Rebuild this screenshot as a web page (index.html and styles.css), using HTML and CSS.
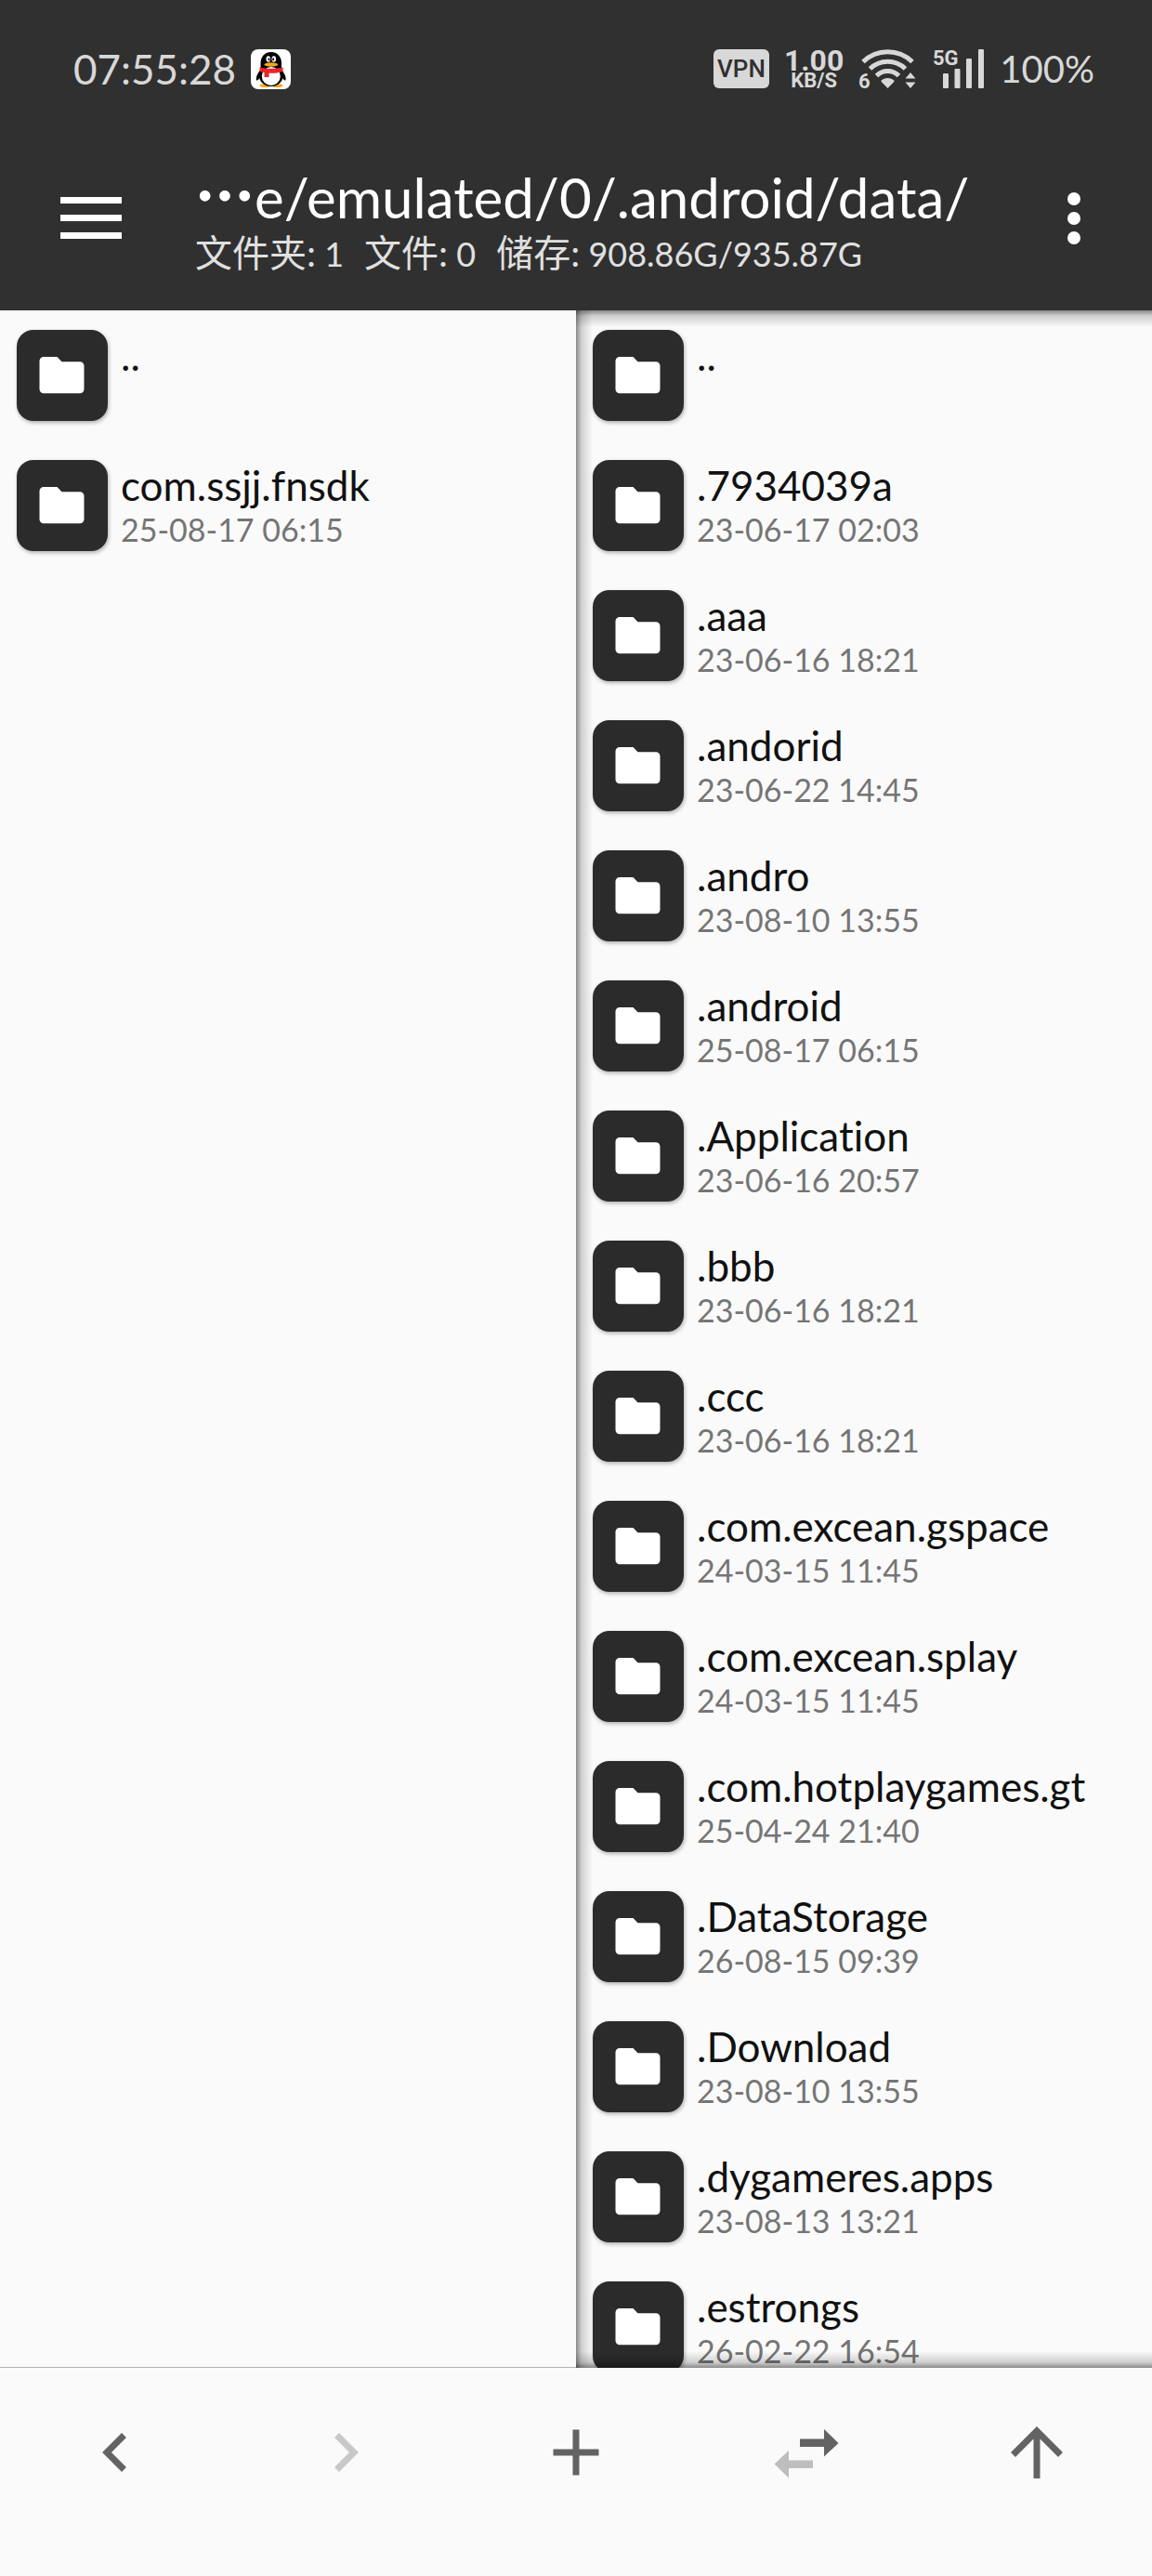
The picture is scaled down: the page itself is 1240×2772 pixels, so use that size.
FILE: index.html
```
<!DOCTYPE html>
<html lang="zh-CN">

<head>
  <meta charset="UTF-8">
  <meta name="viewport" content="width=device-width, initial-scale=1.0">
  <title>文件管理</title>
  <link rel="stylesheet" href="styles.css">
</head>

<body>
  <svg class="sprite" aria-hidden="true">
    <symbol id="folder" viewBox="0 0 98 98">
      <path fill="#fff" d="M29 29h14.500l5 5.200H68a4.500 4.500 0 0 1 4.500 4.500v25A4.500 4.500 0 0 1 68 68.200H29a4.500 4.500 0 0 1-4.500-4.500V33.500A4.500 4.500 0 0 1 29 29z"/>
    </symbol>
  </svg>

  <header class="header">
    <div class="status-bar">
      <span class="clock">07:55:28</span>
      <svg class="app-icon" viewBox="0 0 43 43" aria-hidden="true">
        <rect width="43" height="43" rx="8" fill="#fff"/>
        <ellipse cx="15.500" cy="39" rx="6" ry="2" fill="#f5a81c"/>
        <ellipse cx="28.500" cy="39" rx="6" ry="2" fill="#f5a81c"/>
        <path d="M10.500 22C7 26 5 31 6.200 33.500c1 .5 2.800-1.500 3.500-3zM33 22c3.500 4 5.500 9 4.300 11.500-1 .5-2.800-1.500-3.500-3z" fill="#000"/>
        <ellipse cx="21.800" cy="28" rx="13" ry="12" fill="#000"/>
        <path d="M10.500 20v-5C10.500 7.500 15.500 3 21.800 3S33 7.500 33 15v5z" fill="#000"/>
        <ellipse cx="21.800" cy="29" rx="10" ry="10" fill="#fff"/>
        <path d="M9.500 19.500c8 1.800 17 1.800 25 0v4.500c-5 1.500-10 2-15 1.800V30h-5v-5c-2-.3-3.500-.6-5-1z" fill="#e8252a"/>
        <ellipse cx="18.800" cy="10.500" rx="2.300" ry="3.300" fill="#fff"/>
        <ellipse cx="24.800" cy="10.500" rx="2.300" ry="3.300" fill="#fff"/>
        <ellipse cx="19.500" cy="10.800" rx="1" ry="1.500" fill="#000"/>
        <ellipse cx="24.200" cy="10.800" rx="1" ry="1.500" fill="#000"/>
        <ellipse cx="21.800" cy="16.500" rx="7.500" ry="2.200" fill="#f5a81c"/>
      </svg>

      <div class="status-icons">
        <span class="vpn">VPN</span>
        <span class="speed">
          <span class="speed-value">1.00</span>
          <span class="speed-unit">KB/S</span>
        </span>
        <svg class="wifi" viewBox="0 0 64 44" aria-hidden="true">
          <g fill="none" stroke="#d8d8d8" stroke-width="5">
            <path d="M5 14.500a38 38 0 0 1 53 0"/>
            <path d="M12.500 22a27 27 0 0 1 38 0"/>
            <path d="M19.500 29.500a17 17 0 0 1 24 0"/>
          </g>
          <path fill="#d8d8d8" d="M31.500 32c2.500 0 5 1 7 2.700v1L31.500 43l-7-7.300v-1c2-1.700 4.500-2.700 7-2.700zM56 26l5.500 6.500h-11zM56 43l5.500-6.500h-11z"/>
          <text class="wifi-gen" x="0" y="43">6</text>
        </svg>
        <svg class="signal" viewBox="0 0 56 44" aria-hidden="true">
          <text class="network" x="0" y="18">5G</text>
          <g fill="#d8d8d8">
            <rect x="11" y="27" width="6" height="16" rx="1"/>
            <rect x="23.500" y="22" width="6" height="21" rx="1"/>
            <rect x="36" y="11" width="6" height="32" rx="1"/>
            <rect x="49" y="1" width="6" height="42" rx="1"/>
          </g>
        </svg>
        <span class="battery">100%</span>
      </div>
    </div>

    <div class="toolbar">
      <button class="icon-btn" aria-label="菜单">
        <svg width="66" height="46" viewBox="0 0 66 46">
          <path fill="#fff" d="M0 0h66v7H0zM0 19h66v7H0zM0 38h66v7H0z"/>
        </svg>
      </button>
      <div class="path-info">
        <h1 class="path"><span class="dots">⋯</span>e/emulated/0/.android/data/</h1>
        <p class="summary">
          <span><span class="label">文件夹:</span> 1</span>
          <span><span class="label">文件:</span> 0</span>
          <span><span class="label">储存:</span> 908.86G/935.87G</span>
        </p>
      </div>
      <button class="icon-btn" aria-label="更多">
        <svg width="14" height="58" viewBox="0 0 14 58">
          <circle cx="7" cy="8" r="7" fill="#fff"/>
          <circle cx="7" cy="29" r="7" fill="#fff"/>
          <circle cx="7" cy="50" r="7" fill="#fff"/>
        </svg>
      </button>
    </div>
  </header>

  <main class="panes">
    <section class="pane pane-left">
      <ul class="file-list">
        <li><a class="file" href="#"><svg class="tile"><use href="#folder"/></svg><span class="info"><span class="name">..</span></span></a></li>
        <li><a class="file" href="#"><svg class="tile"><use href="#folder"/></svg><span class="info"><span class="name">com.ssjj.fnsdk</span><span class="date">25-08-17 06:15</span></span></a></li>
      </ul>
    </section>

    <section class="pane pane-right">
      <ul class="file-list">
        <li><a class="file" href="#"><svg class="tile"><use href="#folder"/></svg><span class="info"><span class="name">..</span></span></a></li>
        <li><a class="file" href="#"><svg class="tile"><use href="#folder"/></svg><span class="info"><span class="name">.7934039a</span><span class="date">23-06-17 02:03</span></span></a></li>
        <li><a class="file" href="#"><svg class="tile"><use href="#folder"/></svg><span class="info"><span class="name">.aaa</span><span class="date">23-06-16 18:21</span></span></a></li>
        <li><a class="file" href="#"><svg class="tile"><use href="#folder"/></svg><span class="info"><span class="name">.andorid</span><span class="date">23-06-22 14:45</span></span></a></li>
        <li><a class="file" href="#"><svg class="tile"><use href="#folder"/></svg><span class="info"><span class="name">.andro</span><span class="date">23-08-10 13:55</span></span></a></li>
        <li><a class="file" href="#"><svg class="tile"><use href="#folder"/></svg><span class="info"><span class="name">.android</span><span class="date">25-08-17 06:15</span></span></a></li>
        <li><a class="file" href="#"><svg class="tile"><use href="#folder"/></svg><span class="info"><span class="name">.Application</span><span class="date">23-06-16 20:57</span></span></a></li>
        <li><a class="file" href="#"><svg class="tile"><use href="#folder"/></svg><span class="info"><span class="name">.bbb</span><span class="date">23-06-16 18:21</span></span></a></li>
        <li><a class="file" href="#"><svg class="tile"><use href="#folder"/></svg><span class="info"><span class="name">.ccc</span><span class="date">23-06-16 18:21</span></span></a></li>
        <li><a class="file" href="#"><svg class="tile"><use href="#folder"/></svg><span class="info"><span class="name">.com.excean.gspace</span><span class="date">24-03-15 11:45</span></span></a></li>
        <li><a class="file" href="#"><svg class="tile"><use href="#folder"/></svg><span class="info"><span class="name">.com.excean.splay</span><span class="date">24-03-15 11:45</span></span></a></li>
        <li><a class="file" href="#"><svg class="tile"><use href="#folder"/></svg><span class="info"><span class="name">.com.hotplaygames.gt</span><span class="date">25-04-24 21:40</span></span></a></li>
        <li><a class="file" href="#"><svg class="tile"><use href="#folder"/></svg><span class="info"><span class="name">.DataStorage</span><span class="date">26-08-15 09:39</span></span></a></li>
        <li><a class="file" href="#"><svg class="tile"><use href="#folder"/></svg><span class="info"><span class="name">.Download</span><span class="date">23-08-10 13:55</span></span></a></li>
        <li><a class="file" href="#"><svg class="tile"><use href="#folder"/></svg><span class="info"><span class="name">.dygameres.apps</span><span class="date">23-08-13 13:21</span></span></a></li>
        <li><a class="file" href="#"><svg class="tile"><use href="#folder"/></svg><span class="info"><span class="name">.estrongs</span><span class="date">26-02-22 16:54</span></span></a></li>
      </ul>
    </section>
  </main>

  <nav class="bottom-bar">
    <button class="nav-btn" aria-label="后退">
      <svg viewBox="0 0 84 84"><path fill="none" stroke="#636363" stroke-width="7" d="M51.500 23.500L33 42l18.500 18.500"/></svg>
    </button>
    <button class="nav-btn" aria-label="前进" disabled>
      <svg viewBox="0 0 84 84"><path fill="none" stroke="#c8c8c8" stroke-width="7" d="M32.500 23.500L51 42 32.500 60.500"/></svg>
    </button>
    <button class="nav-btn" aria-label="新建">
      <svg viewBox="0 0 84 84"><path fill="none" stroke="#636363" stroke-width="7" d="M17.500 42h49M42 17.500v49"/></svg>
    </button>
    <button class="nav-btn" aria-label="切换窗口">
      <svg viewBox="0 0 84 84">
        <path fill="#636363" d="M35 27.500h26V17l15.500 15L61 46.500V36H35z"/>
        <path fill="#bebebe" d="M49 50.500H23V40L7.500 54.500 23 69.500V59h26z"/>
      </svg>
    </button>
    <button class="nav-btn" aria-label="上级目录">
      <svg viewBox="0 0 84 84"><path fill="none" stroke="#636363" stroke-width="7" d="M16.500 44.500L42 19l25.500 25.500M42 20v50"/></svg>
    </button>
  </nav>
</body>

</html>
```
FILE: styles.css
```
* {
  margin: 0;
  padding: 0;
  box-sizing: border-box;
}

body {
  font-family: Lato, "Noto Sans CJK SC", sans-serif;
  font-variant-ligatures: none;
  background: #fafafa;
  height: 100vh;
  display: flex;
  flex-direction: column;
}

button {
  background: none;
  border: none;
  cursor: pointer;
}

.sprite {
  display: none;
}

/* header */
.header {
  background: #303030;
  color: #fff;
}

.status-bar {
  display: flex;
  align-items: center;
  height: 136px;
  padding: 12px 62px 0 79px;
  color: #d8d8d8;
}

.clock {
  font-size: 44px;
}

.app-icon {
  width: 43px;
  height: 43px;
  margin-left: 16px;
}

.status-icons {
  display: flex;
  align-items: center;
  gap: 16px;
  margin-left: auto;
}

.vpn {
  background: #d8d8d8;
  color: #303030;
  border-radius: 6px;
  width: 60px;
  font: 500 26px/42px Roboto, sans-serif;
  text-align: center;
}

.speed {
  display: flex;
  flex-direction: column;
  align-items: center;
  font-family: Roboto, sans-serif;
  font-weight: 700;
}

.speed-value {
  font-size: 32px;
  line-height: 26px;
}

.speed-unit {
  font-size: 22px;
  line-height: 18px;
}

.wifi,
.signal {
  height: 44px;
  overflow: visible;
}

.wifi {
  width: 64px;
}

.signal {
  width: 56px;
}

.wifi-gen,
.network {
  fill: #d8d8d8;
  font: 700 22px Roboto, sans-serif;
}

.battery {
  font-size: 40px;
}

.toolbar {
  display: flex;
  align-items: center;
  height: 198px;
  padding: 0 77px 0 65px;
}

.icon-btn svg {
  display: block;
}

.path-info {
  flex: 1;
  min-width: 0;
  margin-left: 79px;
  padding-top: 2px;
  white-space: nowrap;
}

.path {
  font-size: 60px;
  font-weight: 400;
  line-height: 70px;
}

.dots {
  font-family: "Noto Sans CJK SC", sans-serif;
  font-size: 64px;
  font-weight: 900;
  line-height: 1;
}

.summary {
  display: flex;
  gap: 22px;
  color: #e0e0e0;
  font-size: 36px;
  line-height: 50px;
}

.label {
  font-size: 40px;
}

/* file panes */
.panes {
  display: flex;
  flex: 1;
  min-height: 0;
}

.pane {
  position: relative;
  flex: 1;
  min-width: 0;
  overflow: hidden;
}

.pane-left {
  border-bottom: 1px solid #b4b4b4;
}

/* inner shadow of the active pane */
.pane-right::after {
  content: '';
  position: absolute;
  inset: 0;
  background:
    linear-gradient(to right, rgba(0, 0, 0, 0.45), rgba(0, 0, 0, 0.17) 6px, transparent 18px),
    linear-gradient(to bottom, rgba(0, 0, 0, 0.45), rgba(0, 0, 0, 0.17) 6px, transparent 18px),
    linear-gradient(to top, rgba(0, 0, 0, 0.45), rgba(0, 0, 0, 0.17) 6px, transparent 18px);
  pointer-events: none;
}

.file-list {
  list-style: none;
}

.file {
  display: flex;
  align-items: center;
  gap: 14px;
  height: 140px;
  padding: 0 18px;
  color: #111;
  text-decoration: none;
}

.tile {
  flex: none;
  width: 98px;
  height: 98px;
  border-radius: 18px;
  background: #2b2b2b;
  box-shadow: 1px 2px 4px rgba(0, 0, 0, 0.3);
}

.info {
  display: flex;
  flex-direction: column;
  height: 100px;
  padding-top: 4px;
  min-width: 0;
  line-height: 48px;
  white-space: nowrap;
}

.name {
  font-size: 44px;
}

.date {
  color: #757575;
  font-size: 34px;
}

/* bottom bar */
.bottom-bar {
  display: flex;
  height: 224px;
  padding-bottom: 42px;
}

.nav-btn {
  flex: 1;
  display: flex;
  align-items: center;
  justify-content: center;
}

.nav-btn svg {
  width: 84px;
  height: 84px;
}
```
